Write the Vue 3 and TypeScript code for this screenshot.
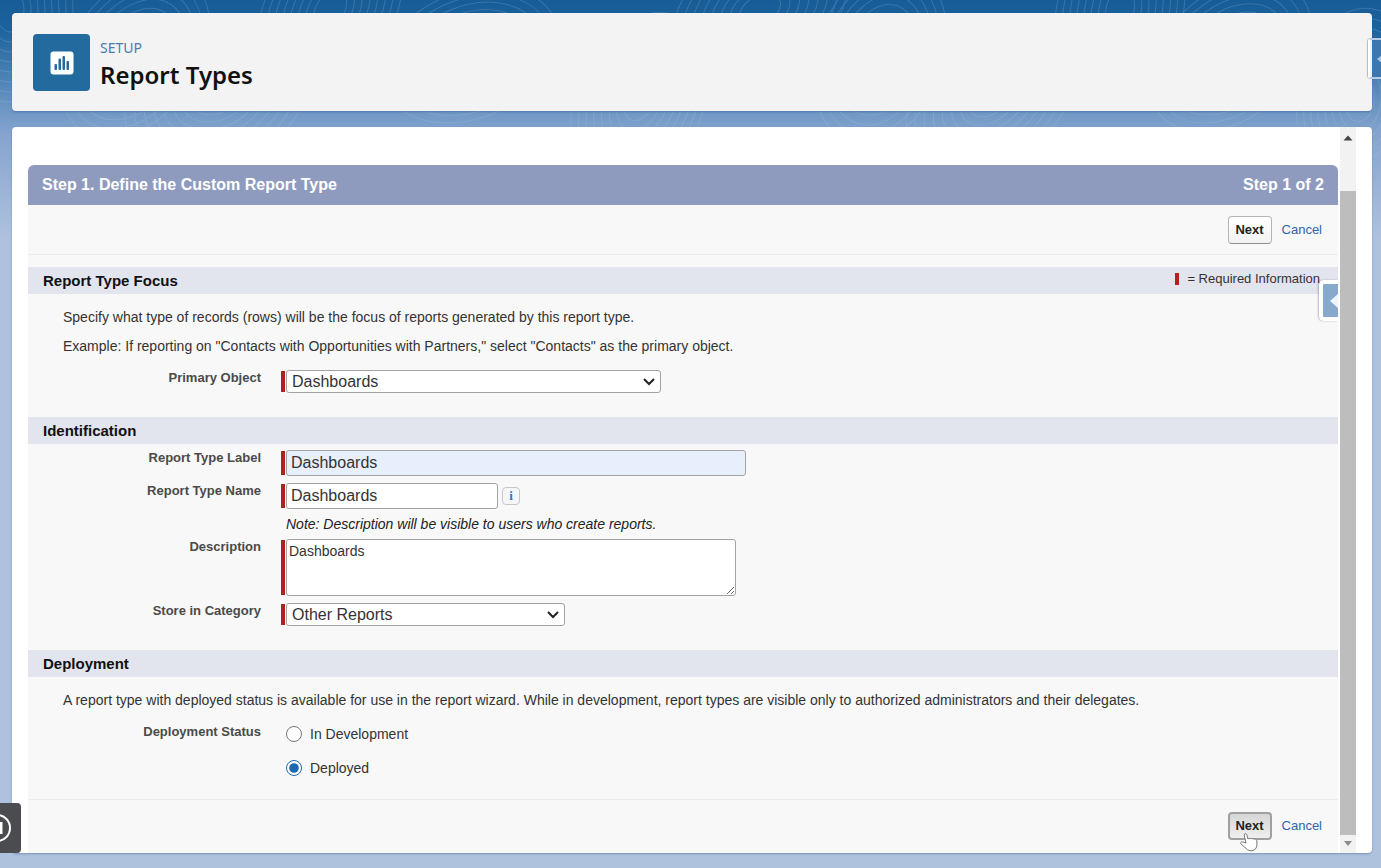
<script setup lang="ts">
import { ref } from 'vue'

const primaryObject = ref('Dashboards')
const typeLabel = ref('Dashboards')
const typeName = ref('Dashboards')
const description = ref('Dashboards')
const category = ref('Other Reports')
const status = ref('deployed')

// Topographic rings drawn behind the cards
const centres = [10, 135, 215, 330, 470, 640, 760, 880, 990, 1120, 1230, 1360]
const rings = centres.flatMap((cx, i) =>
  Array.from({ length: 8 }, (_, k) => ({
    key: `${i}-${k}`,
    cx,
    cy: (i % 3) * 45 + 10,
    rx: 14 + k * 7,
    ry: 22 + k * 10,
    turn: `rotate(${(i * 37) % 80} ${cx} ${(i % 3) * 45 + 10})`,
  })),
)
</script>

<template>
  <div class="page">
    <svg class="contours" aria-hidden="true">
      <ellipse v-for="r in rings" :key="r.key" :cx="r.cx" :cy="r.cy" :rx="r.rx" :ry="r.ry" :transform="r.turn" />
    </svg>

    <header class="card head">
      <span class="badge">
        <svg viewBox="0 0 24 24" width="24" height="24" aria-hidden="true">
          <rect x="0.5" y="0.5" width="23" height="23" rx="3" fill="#fff" />
          <g fill="#236a9f">
            <rect x="4.5" y="13" width="2.5" height="6" rx="1" />
            <rect x="8.5" y="7.5" width="2.5" height="11.5" rx="1" />
            <rect x="12.5" y="5" width="2.5" height="14" rx="1" />
            <rect x="16.5" y="10" width="2.5" height="9" rx="1" />
          </g>
        </svg>
      </span>
      <div>
        <p class="eyebrow">SETUP</p>
        <h1>Report Types</h1>
      </div>
      <button class="edge-tab" type="button" aria-label="Open side panel">
        <svg viewBox="0 0 6 10" width="6" height="10" aria-hidden="true"><path d="M6 0v10L0 5z" fill="#a9c4e2" /></svg>
      </button>
    </header>

    <main class="card body">
      <form class="panel" @submit.prevent>
        <div class="title">
          <h2>Step 1. Define the Custom Report Type</h2>
          <span>Step 1 of 2</span>
        </div>
        <div class="actions top">
          <button class="next" type="submit">Next</button>
          <a href="#">Cancel</a>
        </div>

        <section class="focus">
          <div class="section-head">
            <h3>Report Type Focus</h3>
            <span class="legend"><i class="mark"></i>= Required Information</span>
            <button class="help-tab" type="button" aria-label="Open help">
              <svg viewBox="0 0 8 14" width="8" height="14" aria-hidden="true"><path d="M8 0v14L0 7z" fill="#eef4fa" /></svg>
            </button>
          </div>
          <div class="copy">
            <p>Specify what type of records (rows) will be the focus of reports generated by this report type.</p>
            <p>Example: If reporting on "Contacts with Opportunities with Partners," select "Contacts" as the primary object.</p>
          </div>
          <div class="row">
            <label for="primary">Primary Object</label>
            <div class="control required">
              <select id="primary" v-model="primaryObject" class="wide"><option>Dashboards</option></select>
            </div>
          </div>
        </section>

        <section class="ident">
          <div class="section-head"><h3>Identification</h3></div>
          <div class="rows">
            <div class="row">
              <label for="label">Report Type Label</label>
              <div class="control required"><input id="label" v-model="typeLabel" class="filled" type="text" /></div>
            </div>
            <div class="row">
              <label for="name">Report Type Name</label>
              <div class="control required">
                <input id="name" v-model="typeName" type="text" />
                <button class="info" type="button" aria-label="Information">i</button>
              </div>
            </div>
            <p class="note">Note: Description will be visible to users who create reports.</p>
            <div class="row">
              <label for="desc">Description</label>
              <div class="control required"><textarea id="desc" v-model="description"></textarea></div>
            </div>
            <div class="row">
              <label for="category">Store in Category</label>
              <div class="control required">
                <select id="category" v-model="category"><option>Other Reports</option></select>
              </div>
            </div>
          </div>
        </section>

        <section class="deploy">
          <div class="section-head"><h3>Deployment</h3></div>
          <div class="copy">
            <p>A report type with deployed status is available for use in the report wizard. While in development, report types are visible only to authorized administrators and their delegates.</p>
          </div>
          <div class="row" role="radiogroup" aria-labelledby="status">
            <span id="status" class="caption">Deployment Status</span>
            <div class="radios">
              <label><input v-model="status" type="radio" name="status" value="development" />In Development</label>
              <label><input v-model="status" type="radio" name="status" value="deployed" />Deployed</label>
            </div>
          </div>
        </section>

        <div class="actions bottom">
          <button class="next pressed" type="submit">
            Next
            <svg class="pointer" viewBox="0 0 20 20" width="20" height="20" aria-hidden="true">
              <path d="M7 11 L5.2 3.2 C5 1.4 7.3 1 7.8 2.8 L9 7 C10 6 11.4 6.2 11.8 7 C12.8 6.1 14.2 6.4 14.6 7.3 C16 6.5 17.5 7.2 17.8 8.6 L18 12 C18 15 16.8 17.6 14 18.5 C11.2 19.2 8.7 18.4 7 16.3 L2.2 12.2 C0.8 10.8 2.3 9.2 4 10 Z" fill="#fff" stroke="#777" />
            </svg>
          </button>
          <a href="#">Cancel</a>
        </div>
      </form>

      <div class="scroll" aria-hidden="true">
        <svg viewBox="0 0 16 22" width="16" height="22"><path d="M3.5 13.5h9l-4.500-5z" fill="#444" /></svg>
        <span class="thumb"></span>
        <svg viewBox="0 0 16 18" width="16" height="18"><path d="M4 6h8l-4 5z" fill="#8a8a8a" /></svg>
      </div>
    </main>

    <button class="pause" type="button" aria-label="Pause">
      <svg viewBox="0 0 20 30" width="20" height="30" aria-hidden="true">
        <circle cx="-3" cy="15" r="13" fill="none" stroke="#fff" stroke-width="2" />
        <path d="M1 9v12" stroke="#fff" stroke-width="3" />
      </svg>
    </button>
  </div>
</template>

<style>
body {
  margin: 0;
}
</style>

<style scoped>
.page {
  position: relative;
  box-sizing: border-box;
  min-height: 100vh;
  padding: 13px 9px 15px 12px;
  display: flex;
  flex-direction: column;
  gap: 16px;
  overflow: hidden;
  background: linear-gradient(#175c96 0, #1c639e 30px, #6c96c3 108px, #86a4cf 135px, #aec2de 240px, #aec2de 100%);
  color: #333;
  font: 14px/20px "Liberation Sans", Arial, sans-serif;
}
h1, h2, h3, p {
  margin: 0;
}
button {
  font: inherit;
  padding: 0;
  cursor: pointer;
}
.contours {
  position: absolute;
  inset: 0;
  width: 100%;
  height: 160px;
  fill: none;
  stroke: #a9cbee;
  opacity: 0.22;
}
.card {
  position: relative;
  border-radius: 4px;
  box-shadow: 0 1px 2px rgba(30, 60, 110, 0.35);
}
.head {
  display: flex;
  gap: 10px;
  padding: 21px 21px 19px;
  background: #f3f3f3;
}
.badge {
  width: 57px;
  height: 57px;
  border-radius: 4px;
  background: #236a9f;
  display: grid;
  place-items: center;
}
.eyebrow {
  margin-top: 4px;
  color: #4a7bb3;
  font: 14px/20px "Noto Sans", sans-serif;
}
h1 {
  color: #111;
  font: 600 24px/34px "Noto Sans", sans-serif;
}
.edge-tab {
  position: absolute;
  right: -20px;
  top: 25px;
  width: 24px;
  height: 41px;
  border: 2px solid #b5cbe6;
  border-left-color: #fff;
  border-radius: 4px;
  box-shadow: -1px 0 1px rgba(0, 0, 0, 0.25);
  background: linear-gradient(90deg, #f3f3f3 2px, #3d77af 2px);
  display: grid;
  place-items: center;
}
.body {
  flex: 1;
  display: flex;
  gap: 2px;
  padding: 0 16px;
  background: #fff;
}
.panel {
  flex: 1;
  min-width: 0;
  margin-top: 38px;
  display: flex;
  flex-direction: column;
  background: #f8f8f8;
  border-radius: 6px 6px 0 0;
}
.title {
  display: flex;
  justify-content: space-between;
  padding: 0 14px;
  border-radius: 6px 6px 0 0;
  background: #8e9bbe;
  color: #fff;
  font-weight: bold;
  font-size: 16px;
  line-height: 40px;
}
h2 {
  font: inherit;
}
.actions {
  display: flex;
  justify-content: flex-end;
  gap: 10px;
  padding: 11px 16px 10px;
  font-size: 13px;
  line-height: 28px;
}
a {
  color: #2a66ab;
  text-decoration: none;
}
.top {
  margin-bottom: 12px;
  border-bottom: 1px solid #ececec;
}
.bottom {
  margin-top: auto;
  border-top: 1px solid #ececec;
  padding: 12px 16px 13px;
}
.next {
  position: relative;
  box-sizing: border-box;
  width: 44px;
  height: 28px;
  border: 1px solid #b5b5b5;
  border-bottom-color: #8f8f8f;
  border-radius: 4px;
  background: linear-gradient(#fff, #f2f2f2);
  color: #222;
  font-weight: bold;
  line-height: 24px;
}
.pressed {
  border: 2px solid #a0a0a0;
  background: linear-gradient(#d6d6d6, #efefef);
  line-height: 22px;
}
.pointer {
  position: absolute;
  left: 9px;
  top: 18px;
}
.section-head {
  position: relative;
  display: flex;
  justify-content: space-between;
  padding: 0 18px 0 15px;
  background: #e2e4ee;
  line-height: 27px;
}
h3 {
  color: #111;
  font: inherit;
  font-weight: bold;
  font-size: 15px;
}
.legend {
  display: flex;
  gap: 8px;
  font-size: 13px;
  line-height: 24px;
}
.mark {
  width: 4px;
  height: 12px;
  margin-top: 6px;
  background: #b41f1c;
}
.help-tab {
  position: absolute;
  right: 0;
  top: 13px;
  width: 19px;
  height: 41px;
  border: 4px solid #fff;
  border-right: 0;
  border-radius: 5px 0 0 5px;
  box-shadow: -1px 0 2px rgba(0, 0, 0, 0.25);
  background: #86a9cc;
  display: grid;
  place-items: center end;
}
.copy {
  display: grid;
  gap: 9px;
  padding: 13px 35px 14px;
}
.focus {
  padding-bottom: 24px;
}
.row {
  display: grid;
  grid-template-columns: 233px 1fr;
  gap: 20px;
  align-items: start;
}
.row > label, .caption {
  text-align: right;
  font-size: 13px;
  font-weight: bold;
  line-height: 16px;
  color: #4a4a4a;
}
.control {
  display: flex;
  align-items: center;
}
.required::before {
  content: "";
  align-self: stretch;
  width: 4px;
  margin: 1px 1px 1px 0;
  background: #b0201c;
}
input[type="text"], select, textarea {
  box-sizing: border-box;
  border: 1px solid #a3a3a3;
  border-radius: 3px;
  background: #fff;
  color: #333;
  margin: 0;
  font: 16px/20px "Liberation Sans", Arial, sans-serif;
}
input[type="text"] {
  width: 212px;
  height: 26px;
  padding: 0 4px 1px;
}
input.filled {
  width: 460px;
  background: #e7effd;
}
select {
  appearance: none;
  width: 279px;
  height: 23px;
  padding: 0 24px 0 5px;
  background: #fff url("data:image/svg+xml,%3Csvg xmlns='http://www.w3.org/2000/svg' width='12' height='8' fill='none' stroke='%23222' stroke-width='2'%3E%3Cpath d='M1 1l5 5 5-5'/%3E%3C/svg%3E") no-repeat right 5px center;
}
select.wide {
  width: 375px;
}
textarea {
  width: 450px;
  height: 57px;
  padding: 1px 2px;
  font-size: 14px;
  resize: both;
}
.info {
  box-sizing: border-box;
  width: 18px;
  height: 18px;
  margin-left: 4px;
  border: 1px solid #c4c8ce;
  border-radius: 4px;
  background: #f4f6f9;
  color: #2d78c0;
  font: bold 13px/16px "Liberation Serif", serif;
}
.rows {
  display: grid;
  gap: 7px;
  padding: 6px 0 24px;
}
.note {
  padding-left: 258px;
  color: #222;
  font-style: italic;
  line-height: 16px;
}
.radios {
  display: grid;
  gap: 14px;
}
.radios label {
  display: flex;
  align-items: center;
  gap: 8px;
}
.radios input {
  width: 16px;
  height: 16px;
  margin: 0 0 0 5px;
  accent-color: #1f69b3;
}
.scroll {
  width: 16px;
  display: flex;
  flex-direction: column;
  background: #f2f2f2;
}
.thumb {
  flex: 1;
  margin-top: 42px;
  background: #bdbdbd;
}
.pause {
  position: absolute;
  left: 0;
  bottom: 15px;
  width: 21px;
  height: 50px;
  border: 0;
  border-radius: 0 4px 4px 0;
  background: #4a4c50;
  display: grid;
  place-items: center start;
}
</style>
